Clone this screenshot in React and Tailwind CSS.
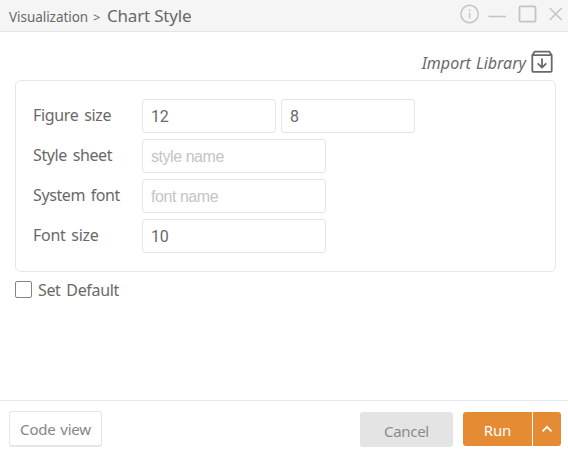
function Field({ label, spacing, children }) {
  return (
    <div className="flex h-[34px] items-center">
      <label className={`-mt-[3px] w-[109px] whitespace-nowrap text-[16px] leading-[20px] [word-spacing:2px] ${spacing}`}>{label}</label>
      <div className="flex gap-[5px]">{children}</div>
    </div>
  );
}

const inputBase =
  "h-[34px] rounded-[3px] border border-[#e6e6e6] bg-white px-[8px] font-['Roboto',sans-serif] text-[16px] tracking-[-0.3px] text-[#696969] outline-none placeholder:font-['Liberation_Sans',Arial,sans-serif] placeholder:tracking-[-0.45px] placeholder:text-[#c4c4c4]";

export default function App() {
  return (
    <div className="flex h-[451px] w-[568px] flex-col overflow-hidden bg-white font-['Noto_Sans','Noto_Sans_CJK_KR',sans-serif] text-[#696969]">
      <header className="flex h-[32px] shrink-0 items-center border-b border-[#e6e6e6] bg-[#f5f5f5] pl-[9px]">
        <div className="flex flex-1 items-baseline whitespace-nowrap pt-[2px]">
          <span className="w-[84px] text-[13.5px] leading-[20px] tracking-[-0.05px]">Visualization</span>
          <span className="w-[14px] text-[13px]">&gt;</span>
          <h1 className="text-[17px] leading-[22px] tracking-[-0.2px]">Chart Style</h1>
        </div>
        <svg width="112" height="28" viewBox="456 2 112 28" fill="none" stroke="#c4c4c4" strokeWidth="1.5">
          <circle cx="469.6" cy="14" r="8.7" />
          <path d="M469.6 13v5.5M469.6 9.5v1.7M488.5 16.5h17.5" />
          <rect x="519.5" y="6.3" width="16" height="15.3" rx="1" strokeWidth="1.8" />
          <path d="M549.7 8l12 12M561.7 8l-12 12" />
        </svg>
      </header>
      <main className="flex-1 px-[15px] pt-[17px]">
        <div className="flex h-[26px] items-center justify-end">
          <span className="mr-[5px] mt-[2px] whitespace-nowrap text-[16px] italic leading-[24px] [word-spacing:1px]">Import Library</span>
          <svg width="22" height="24" viewBox="0 0 22 24" fill="none" stroke="#696969" strokeWidth="1.8" strokeLinejoin="round">
            <path d="M1.3 5.2 3.8 1.6h14.4l2.5 3.6v15.5a1.2 1.2 0 0 1-1.2 1.2h-17a1.2 1.2 0 0 1-1.2-1.2zM1.3 5.2h19.4M11 8.5v9M6.7 13.3l4.3 4.3 4.3-4.3" />
          </svg>
        </div>
        <section className="mt-[5px] flex h-[192px] w-[541px] flex-col gap-[6px] rounded-[6px] border border-[#e6e6e6] pl-[17px] pt-[18px]">
          <Field label="Figure size" spacing="tracking-[-0.35px]">
            <input className={`${inputBase} w-[134px]`} defaultValue="12" />
            <input className={`${inputBase} w-[134px]`} defaultValue="8" />
          </Field>
          <Field label="Style sheet" spacing="tracking-[-0.4px]">
            <input className={`${inputBase} w-[184px]`} placeholder="style name" />
          </Field>
          <Field label="System font" spacing="tracking-[-0.4px]">
            <input className={`${inputBase} w-[184px]`} placeholder="font name" />
          </Field>
          <Field label="Font size" spacing="tracking-[-0.3px]">
            <input className={`${inputBase} w-[184px]`} defaultValue="10" />
          </Field>
        </section>
        <label className="mt-[6px] flex h-[24px] items-center gap-[6px]">
          <input type="checkbox" className="-mt-[2px] size-[17px] appearance-none rounded-[2px] border border-[#858585] bg-white" />
          <span className="text-[16px] leading-[24px] tracking-[-0.35px] [word-spacing:2px]">Set Default</span>
        </label>
      </main>
      <footer className="flex h-[51px] shrink-0 items-start border-t border-[#e6e6e6] pl-[9px] pr-[7px] pt-[10px]">
        <button className="h-[36px] w-[93px] whitespace-nowrap rounded-[3px] border border-b-2 border-[#e6e6e6] bg-white pt-[2px] text-[15px] tracking-[-0.2px] text-[#858585] [word-spacing:1px]">Code view</button>
        <button className="ml-auto mr-[10px] mt-px h-[35px] w-[93px] rounded-[3px] bg-[#e4e4e4] pt-[3px] text-[15px] tracking-[-0.3px] text-[#8a8a8a]">Cancel</button>
        <div className="mt-px flex h-[34px] gap-px">
          <button className="w-[69px] rounded-l-[3px] bg-[#e58b34] pt-[2px] text-[15px] tracking-[-0.2px] text-white">Run</button>
          <button className="flex w-[28px] items-center justify-center rounded-r-[3px] bg-[#e58b34]">
            <svg width="12" height="8" viewBox="0 0 12 8" fill="none" stroke="white" strokeWidth="1.8"><path d="M1.5 6.3 6 1.8l4.5 4.5" /></svg>
          </button>
        </div>
      </footer>
    </div>
  );
}
